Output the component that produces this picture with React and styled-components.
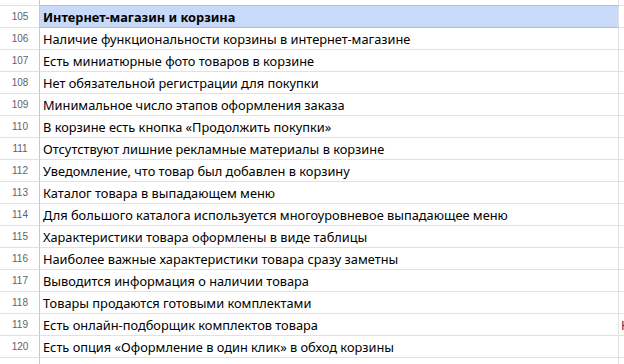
import React from "react"
import styled, { createGlobalStyle } from "styled-components"

const GlobalStyle = createGlobalStyle`
  html, body {
    margin: 0;
    padding: 0;
    background: #ffffff;
    overflow: hidden;
  }
`

const rows = [
  { n: 104, text: "" },
  { n: 105, text: "Интернет-магазин и корзина", header: true },
  { n: 106, text: "Наличие функциональности корзины в интернет-магазине" },
  { n: 107, text: "Есть миниатюрные фото товаров в корзине" },
  { n: 108, text: "Нет обязательной регистрации для покупки" },
  { n: 109, text: "Минимальное число этапов оформления заказа" },
  { n: 110, text: "В корзине есть кнопка «Продолжить покупки»" },
  { n: 111, text: "Отсутствуют лишние рекламные материалы в корзине" },
  { n: 112, text: "Уведомление, что товар был добавлен в корзину" },
  { n: 113, text: "Каталог товара в выпадающем меню" },
  { n: 114, text: "Для большого каталога используется многоуровневое выпадающее меню" },
  { n: 115, text: "Характеристики товара оформлены в виде таблицы" },
  { n: 116, text: "Наиболее важные характеристики товара сразу заметны" },
  { n: 117, text: "Выводится информация о наличии товара" },
  { n: 118, text: "Товары продаются готовыми комплектами" },
  { n: 119, text: "Есть онлайн-подборщик комплектов товара", extra: "Нет" },
  { n: 120, text: "Есть опция «Оформление в один клик» в обход корзины" },
  { n: 121, text: "" },
]

const Sheet = styled.div`
  display: grid;
  grid-template-columns: 40px 579px 120px;
  margin-top: -16px;
  width: 740px;
`

const RowNum = styled.div`
  height: 21px;
  border-right: 1px solid #c7c7c7;
  border-bottom: 1px solid #e1e1e1;
  display: flex;
  align-items: center;
  justify-content: center;
  padding-left: 1px;
  font-family: "Liberation Sans", Arial, sans-serif;
  font-size: 10px;
  color: #5f6368;
  background: #ffffff;
`

const Cell = styled.div`
  height: 21px;
  border-right: 1px solid #e1e1e1;
  border-bottom: 1px solid ${({ $blue }) => ($blue ? "#a9bde6" : "#e1e1e1")};
  background: ${({ $header }) => ($header ? "#c9daf8" : "#ffffff")};
  display: flex;
  align-items: center;
  padding-left: 3px;
  font-family: "Noto Sans", "Open Sans", sans-serif;
  font-size: 12.8px;
  font-weight: ${({ $header }) => ($header ? 700 : 400)};
  color: #000000;
  white-space: nowrap;
  overflow: hidden;
`

const ExtraCell = styled(Cell)`
  color: #741b47;
  padding-left: 2px;
`

export default function App() {
  return (
    <>
      <GlobalStyle />
      <Sheet>
        {rows.map((r, i) => {
          const next = rows[i + 1]
          const blue = r.header || (next && next.header)
          return (
            <React.Fragment key={r.n}>
              <RowNum>{r.n}</RowNum>
              <Cell $header={r.header} $blue={blue}>
                {r.text}
              </Cell>
              <ExtraCell>{r.extra || ""}</ExtraCell>
            </React.Fragment>
          )
        })}
      </Sheet>
    </>
  )
}
